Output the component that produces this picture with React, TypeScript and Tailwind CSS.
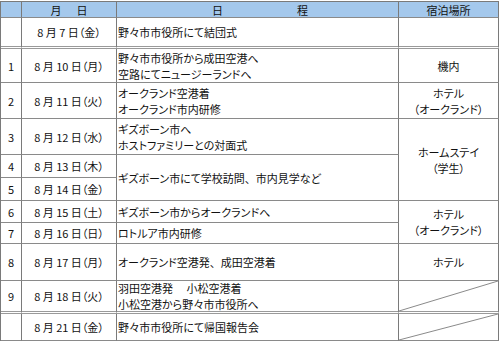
import React from "react";

type CellProps = { children?: React.ReactNode; className?: string };

// one grid cell, every cell draws its own right and bottom rule
function Cell({ children, className = "" }: CellProps) {
  return (
    <div className={`flex items-center border-r border-b border-r-[#7a7a7a] border-b-[#8a8a8a] ${className}`}>
      {children}
    </div>
  );
}

const dbl = "border-b-[3px] border-double border-b-[#9a9a9a]";

function Slash() {
  return (
    <svg className="h-full w-full" viewBox="0 0 100 10" preserveAspectRatio="none">
      <line x1="0" y1="10" x2="100" y2="0" stroke="#8a8a8a" strokeWidth="1" vectorEffect="non-scaling-stroke" />
    </svg>
  );
}

function Lines({ items }: { items: string[] }) {
  return (
    <div className="flex flex-col leading-[16px]">
      {items.map((t) => (
        <span key={t}>{t}</span>
      ))}
    </div>
  );
}

// full-width comma, as in the printed schedule
const Comma = () => <span className="[font-feature-settings:normal]">、</span>;

export default function App() {
  const no = "justify-center";
  const date = "justify-center";
  const plan = "pl-px";
  const stay = "justify-center text-center";

  return (
    <div className="h-[341px] w-[500px] bg-white">
      <div
        className="mt-px grid w-[499px] grid-cols-[21px_95px_282px_100px] grid-rows-[16px_31px_34px_36px_36px_23px_23px_22px_21px_37px_33px_27px] border-t border-l border-[#7a7a7a] text-[11px] leading-[16px] text-[#111] [font-feature-settings:'palt']"
        style={{ fontFamily: '"Noto Sans CJK JP", "Noto Sans", sans-serif' }}
      >
        {/* header */}
        <Cell className="bg-[#a4c8ec]" />
        <Cell className="justify-center gap-[15px] bg-[#a4c8ec]">
          <span>月</span>
          <span>日</span>
        </Cell>
        <Cell className="justify-center gap-[74px] bg-[#a4c8ec] pl-[5px]">
          <span>日</span>
          <span>程</span>
        </Cell>
        <Cell className="justify-center bg-[#a4c8ec]">宿泊場所</Cell>

        {/* 結団式 */}
        <Cell className={`${no} ${dbl}`} />
        <Cell className={`${date} ${dbl}`}>8 月 7 日（金）</Cell>
        <Cell className={`${plan} ${dbl}`}>野々市市役所にて結団式</Cell>
        <Cell className={`${stay} ${dbl}`} />

        <Cell className={no}>1</Cell>
        <Cell className={date}>8 月 10 日（月）</Cell>
        <Cell className={plan}>
          <Lines items={["野々市市役所から成田空港へ", "空路にてニュージーランドへ"]} />
        </Cell>
        <Cell className={stay}>機内</Cell>

        <Cell className={no}>2</Cell>
        <Cell className={date}>8 月 11 日（火）</Cell>
        <Cell className={plan}>
          <Lines items={["オークランド空港着", "オークランド市内研修"]} />
        </Cell>
        <Cell className={stay}>
          <Lines items={["ホテル", "（オークランド）"]} />
        </Cell>

        <Cell className={no}>3</Cell>
        <Cell className={date}>8 月 12 日（水）</Cell>
        <Cell className={plan}>
          <Lines items={["ギズボーン市へ", "ホストファミリーとの対面式"]} />
        </Cell>
        <Cell className={`${stay} row-span-3`}>
          <Lines items={["ホームステイ", "（学生）"]} />
        </Cell>

        <Cell className={no}>4</Cell>
        <Cell className={date}>8 月 13 日（木）</Cell>
        <Cell className={`${plan} row-span-2`}>
          <span>
            ギズボーン市にて学校訪問
            <Comma />
            市内見学など
          </span>
        </Cell>

        <Cell className={no}>5</Cell>
        <Cell className={date}>8 月 14 日（金）</Cell>

        <Cell className={no}>6</Cell>
        <Cell className={date}>8 月 15 日（土）</Cell>
        <Cell className={plan}>ギズボーン市からオークランドへ</Cell>
        <Cell className={`${stay} row-span-2`}>
          <Lines items={["ホテル", "（オークランド）"]} />
        </Cell>

        <Cell className={no}>7</Cell>
        <Cell className={date}>8 月 16 日（日）</Cell>
        <Cell className={plan}>ロトルア市内研修</Cell>

        <Cell className={no}>8</Cell>
        <Cell className={date}>8 月 17 日（月）</Cell>
        <Cell className={plan}>
          <span>
            オークランド空港発
            <Comma />
            成田空港着
          </span>
        </Cell>
        <Cell className={stay}>ホテル</Cell>

        <Cell className={`${no} ${dbl}`}>9</Cell>
        <Cell className={`${date} ${dbl}`}>8 月 18 日（火）</Cell>
        <Cell className={`${plan} ${dbl}`}>
          <Lines items={["羽田空港発　 小松空港着", "小松空港から野々市市役所へ"]} />
        </Cell>
        <Cell className={dbl}>
          <Slash />
        </Cell>

        {/* 帰国報告会 */}
        <Cell className={no} />
        <Cell className={date}>8 月 21 日（金）</Cell>
        <Cell className={plan}>野々市市役所にて帰国報告会</Cell>
        <Cell>
          <Slash />
        </Cell>
      </div>
    </div>
  );
}
